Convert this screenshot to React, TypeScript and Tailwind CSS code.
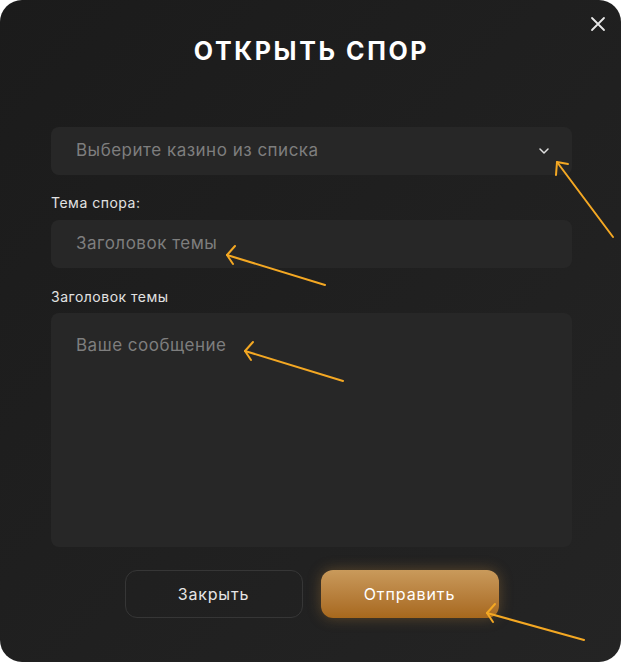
import React from "react";

export default function App() {
  return (
    <div className="w-[621px] h-[662px] bg-white" style={{ fontFamily: "Inter, 'Open Sans', sans-serif" }}>
      <div className="relative w-[621px] h-[662px] rounded-[22px] bg-gradient-to-br from-[#1b1b1b] to-[#242424] flex flex-col pl-[51px] pr-[49px] pt-[34px]">
        <button className="absolute right-[14px] top-[15px] w-[18px] h-[18px] flex items-center justify-center">
          <svg width="16" height="16" viewBox="0 0 16 16" fill="none" stroke="#e8e8e8" strokeWidth="1.8" strokeLinecap="round">
            <path d="M2 2L14 14M14 2L2 14" />
          </svg>
        </button>
        <h1 className="text-center text-white font-bold text-[25px] leading-[34px] tracking-[2.6px]">ОТКРЫТЬ СПОР</h1>
        <div className="mt-[59px] h-[48px] rounded-[8px] bg-[#272727] flex items-center justify-between pl-[25px] pr-[23px]">
          <span className="text-[17px] tracking-[0.5px] text-[#7e7e7e]">Выберите казино из списка</span>
          <svg width="10" height="6" viewBox="0 0 10 6" fill="none" stroke="#e0e0e0" strokeWidth="1.5" strokeLinecap="round" strokeLinejoin="round">
            <path d="M1 1L5 5L9 1" />
          </svg>
        </div>
        <label className="mt-[19px] text-[14px] leading-[18px] tracking-[0.5px] text-[#e2e2e2]">Тема спора:</label>
        <div className="mt-[8px] h-[48px] rounded-[8px] bg-[#272727] flex items-center pl-[25px]">
          <span className="text-[17px] tracking-[0.5px] text-[#7e7e7e]">Заголовок темы</span>
        </div>
        <label className="mt-[20px] text-[14px] leading-[18px] tracking-[0.5px] text-[#e2e2e2]">Заголовок темы</label>
        <div className="mt-[7px] h-[234px] rounded-[8px] bg-[#272727] pl-[25px] pt-[20px]">
          <span className="text-[17px] tracking-[0.5px] text-[#7e7e7e]">Ваше сообщение</span>
        </div>
        <div className="mt-[23px] flex justify-center gap-[18px]">
          <button className="w-[178px] h-[48px] rounded-[12px] border border-[#363636] text-[16px] tracking-[0.8px] text-[#e6e6e6]">Закрыть</button>
          <button className="w-[178px] h-[48px] rounded-[12px] bg-gradient-to-b from-[#c99a5b] to-[#a7681c] text-[16px] tracking-[0.9px] text-white shadow-[0_0_14px_rgba(201,140,60,0.35)]">Отправить</button>
        </div>
        <svg className="absolute inset-0 pointer-events-none" width="621" height="662" viewBox="0 0 621 662" fill="none" stroke="#f4a823" strokeWidth="2" strokeLinecap="round" strokeLinejoin="round">
          <path d="M613 237L557 162" />
          <path d="M557 162L556 175M557 162L568 164" />
          <path d="M325 285L227 255" />
          <path d="M227 255L235 246M227 255L233 264" />
          <path d="M343 381L245 351" />
          <path d="M245 351L253 342M245 351L251 360" />
          <path d="M584 640L487 613" />
          <path d="M487 613L495 604M487 613L493 622" />
        </svg>
      </div>
    </div>
  );
}
